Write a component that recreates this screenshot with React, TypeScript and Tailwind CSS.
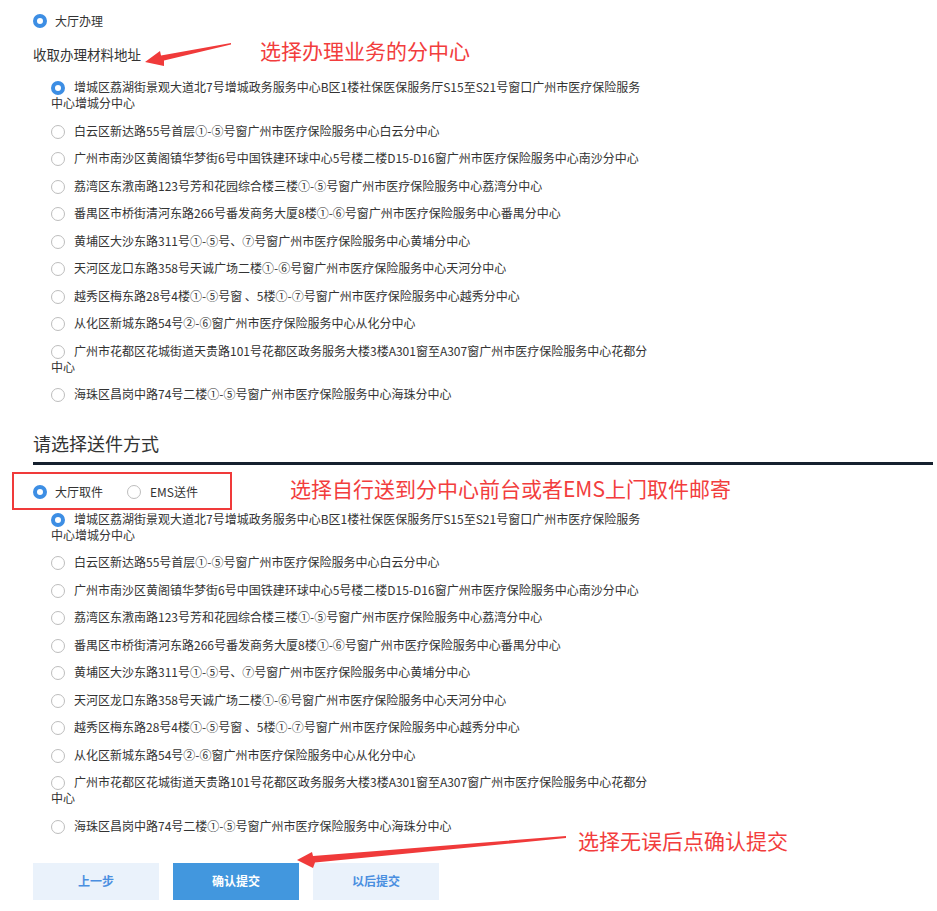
import React from "react";

const items = [
  "增城区荔湖街景观大道北7号增城政务服务中心B区1楼社保医保服务厅S15至S21号窗口广州市医疗保险服务中心增城分中心",
  "白云区新达路55号首层①-⑤号窗广州市医疗保险服务中心白云分中心",
  "广州市南沙区黄阁镇华梦街6号中国铁建环球中心5号楼二楼D15-D16窗广州市医疗保险服务中心南沙分中心",
  "荔湾区东漖南路123号芳和花园综合楼三楼①-⑤号窗广州市医疗保险服务中心荔湾分中心",
  "番禺区市桥街清河东路266号番发商务大厦8楼①-⑥号窗广州市医疗保险服务中心番禺分中心",
  "黄埔区大沙东路311号①-⑤号、⑦号窗广州市医疗保险服务中心黄埔分中心",
  "天河区龙口东路358号天诚广场二楼①-⑥号窗广州市医疗保险服务中心天河分中心",
  "越秀区梅东路28号4楼①-⑤号窗 、5楼①-⑦号窗广州市医疗保险服务中心越秀分中心",
  "从化区新城东路54号②-⑥窗广州市医疗保险服务中心从化分中心",
  "广州市花都区花城街道天贵路101号花都区政务服务大楼3楼A301窗至A307窗广州市医疗保险服务中心花都分中心",
  "海珠区昌岗中路74号二楼①-⑤号窗广州市医疗保险服务中心海珠分中心",
];

function Radio({ checked }: { checked?: boolean }) {
  return checked ? (
    <span className="inline-block w-[14px] h-[14px] rounded-full border-[4px] border-[#3d8ee4] bg-white align-[-3px] box-border" />
  ) : (
    <span className="inline-block w-[14px] h-[14px] rounded-full border border-[#bdbdbd] bg-white align-[-3px] box-border" />
  );
}

function AddressList() {
  return (
    <div className="pl-[51px] w-[651px]">
      {items.map((t, i) => (
        <div key={i} className="py-[5.75px] leading-[16px] text-[12px] text-[#333]">
          <span className="mr-[9px]">
            <Radio checked={i === 0} />
          </span>
          {t}
        </div>
      ))}
    </div>
  );
}

function Btn({ label, primary }: { label: string; primary?: boolean }) {
  return (
    <button
      className={
        primary
          ? "w-[126px] h-[37px] bg-[#4297de] text-white text-[12px] font-bold"
          : "w-[126px] h-[37px] bg-[#eaf2fb] text-[#4a8fe0] text-[12px] font-bold"
      }
    >
      {label}
    </button>
  );
}

export default function App() {
  return (
    <div
      className="relative w-[937px] min-h-[911px] bg-white text-[#333]"
      style={{ fontFamily: '"Noto Sans CJK SC", "Noto Sans", sans-serif' }}
    >
      <div className="pl-[33px] pt-[13px]">
        <div className="h-[16px] flex items-center text-[12px] leading-[16px]">
          <span className="mr-[8px] flex">
            <Radio checked />
          </span>
          <span>大厅办理</span>
        </div>
        <div className="mt-[16px] text-[13.5px] leading-[18px]">收取办理材料地址</div>
      </div>
      <div className="mt-[10.25px]">
        <AddressList />
      </div>

      <div className="pl-[33px] mt-[23px]">
        <div className="w-[900px] border-b-[3px] border-[#15202e] pb-[7px] text-[18px] leading-[24px] text-[#333]">
          请选择送件方式
        </div>
        <div className="mt-[19px] h-[16px] flex items-center text-[12px] leading-[16px]">
          <span className="mr-[8px] flex">
            <Radio checked />
          </span>
          <span>大厅取件</span>
          <span className="ml-[24px] mr-[9px] flex">
            <Radio />
          </span>
          <span>EMS送件</span>
        </div>
      </div>
      <div className="mt-[5.25px]">
        <AddressList />
      </div>

      <div className="pl-[33px] mt-[23px] flex gap-[14px]">
        <Btn label="上一步" />
        <Btn label="确认提交" primary />
        <Btn label="以后提交" />
      </div>

      {/* annotations */}
      <div className="absolute left-[12px] top-[472px] w-[220px] h-[38px] border-2 border-[#f03a3a] pointer-events-none" />
      <div className="absolute left-[260px] top-[36px] text-[21px] leading-[28px] text-[#f23d3d] whitespace-nowrap">
        选择办理业务的分中心
      </div>
      <div className="absolute left-[290px] top-[474px] text-[21px] leading-[28px] text-[#f23d3d] whitespace-nowrap">
        选择自行送到分中心前台或者EMS上门取件邮寄
      </div>
      <div className="absolute left-[578px] top-[826px] text-[21px] leading-[28px] text-[#f23d3d] whitespace-nowrap">
        选择无误后点确认提交
      </div>
      <svg className="absolute left-0 top-0 pointer-events-none" width="937" height="911">
        <polygon
          points="145,62 160,51 161,55.5 231,43 231,44.5 164,60.5 164,66"
          fill="#f03a3a"
        />
        <polygon
          points="297,860 312,852 313,856 566,836 566,838 315,862.5 313,868"
          fill="#f03a3a"
        />
      </svg>
    </div>
  );
}
